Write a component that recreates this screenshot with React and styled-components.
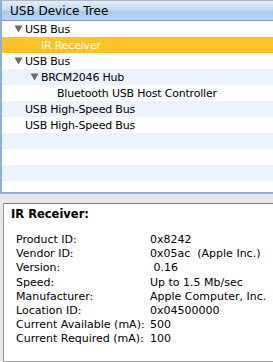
import styled, { createGlobalStyle } from 'styled-components';

const GlobalStyle = createGlobalStyle`
  html, body {
    margin: 0;
    padding: 0;
    background: #e8e8e8;
    overflow: hidden;
  }
  body {
    font-family: "DejaVu Sans", "Liberation Sans", sans-serif;
    font-size: 11px;
    color: #000;
  }
`;

const tree = [
  { label: 'USB Bus', level: 0, open: true },
  { label: 'IR Receiver', level: 1, selected: true },
  { label: 'USB Bus', level: 0, open: true },
  { label: 'BRCM2046 Hub', level: 1, open: true },
  { label: 'Bluetooth USB Host Controller', level: 2 },
  { label: 'USB High-Speed Bus', level: 0 },
  { label: 'USB High-Speed Bus', level: 0 },
  {}, {}, {}, {},
];

const details = [
  ['Product ID:', '0x8242'],
  ['Vendor ID:', '0x05ac  (Apple Inc.)'],
  ['Version:', ' 0.16'],
  ['Speed:', 'Up to 1.5 Mb/sec'],
  ['Manufacturer:', 'Apple Computer, Inc.'],
  ['Location ID:', '0x04500000'],
  ['Current Available (mA):', '500'],
  ['Current Required (mA):', '100'],
];

// window is cut off on the right, so panels have no right edge
const Window = styled.div`
  width: 273px;
  height: 362px;
  display: flex;
  flex-direction: column;
  overflow: hidden;
`;

const TreePanel = styled.div`
  border-left: 2px solid #8cafd8;
  border-bottom: 2px solid #8cafd8;
  box-shadow: inset 1px 0 0 #6f8db3, inset 0 -1px 0 #6f8db3;
  background: #fff;
  display: flex;
  flex-direction: column;
`;

const Header = styled.div`
  height: 19px;
  border-top: 1px solid #aab8c6;
  border-bottom: 1px solid #7a9cc4;
  background: linear-gradient(#e2edf8 0%, #c7dcf1 45%, #a9cbec 55%, #b9d5f1 100%);
  display: flex;
  align-items: center;
  padding-left: 8px;
  font-size: 12px;
`;

const Rows = styled.div`
  height: 171px;
  overflow: hidden;
`;

const Row = styled.div`
  height: 16px;
  display: flex;
  align-items: center;
  padding-left: ${(p) => 12 + p.$level * 16}px;
  background: ${(p) => (p.$selected ? '#fec12a' : p.$odd ? '#edf3fe' : '#fff')};
  color: ${(p) => (p.$selected ? '#fff' : '#000')};
  font-size: 11px;
  letter-spacing: -0.2px;
  white-space: nowrap;
`;

const Disclosure = styled.span`
  width: 11px;
  height: 16px;
  display: flex;
  align-items: center;
  flex: none;
`;

const Gap = styled.div`
  height: 9px;
  flex: none;
`;

const DetailBox = styled.div`
  flex: 1;
  margin-left: 3px;
  background: #fff;
  border: 1px solid #9a9a9a;
  border-top-color: #7c7c7c;
  border-right: none;
  padding: 3px 0 0 7px;
`;

const Title = styled.div`
  font-weight: bold;
  font-size: 11.5px;
  line-height: 14px;
  margin-bottom: 12px;
`;

const Table = styled.div`
  display: grid;
  grid-template-columns: 134px auto;
  padding-left: 5px;
  font-size: 11px;
  line-height: 14.2px;
  white-space: pre;
`;

function Triangle() {
  return (
    <svg width="9" height="8" viewBox="0 0 9 8">
      <path d="M0.5 0.5 H8.5 L4.5 7.5 Z" fill="#6b6b6b" />
    </svg>
  );
}

export default function App() {
  return (
    <>
      <GlobalStyle />
      <Window>
        <TreePanel>
          <Header>USB Device Tree</Header>
          <Rows>
            {tree.map((item, i) => (
              <Row key={i} $level={item.level || 0} $odd={i % 2 === 1} $selected={item.selected}>
                <Disclosure>{item.open && <Triangle />}</Disclosure>
                {item.label}
              </Row>
            ))}
          </Rows>
        </TreePanel>
        <Gap />
        <DetailBox>
          <Title>IR Receiver:</Title>
          <Table>
            {details.map(([k, v]) => (
              <>
                <span key={k}>{k}</span>
                <span key={k + 'v'}>{v}</span>
              </>
            ))}
          </Table>
        </DetailBox>
      </Window>
    </>
  );
}
